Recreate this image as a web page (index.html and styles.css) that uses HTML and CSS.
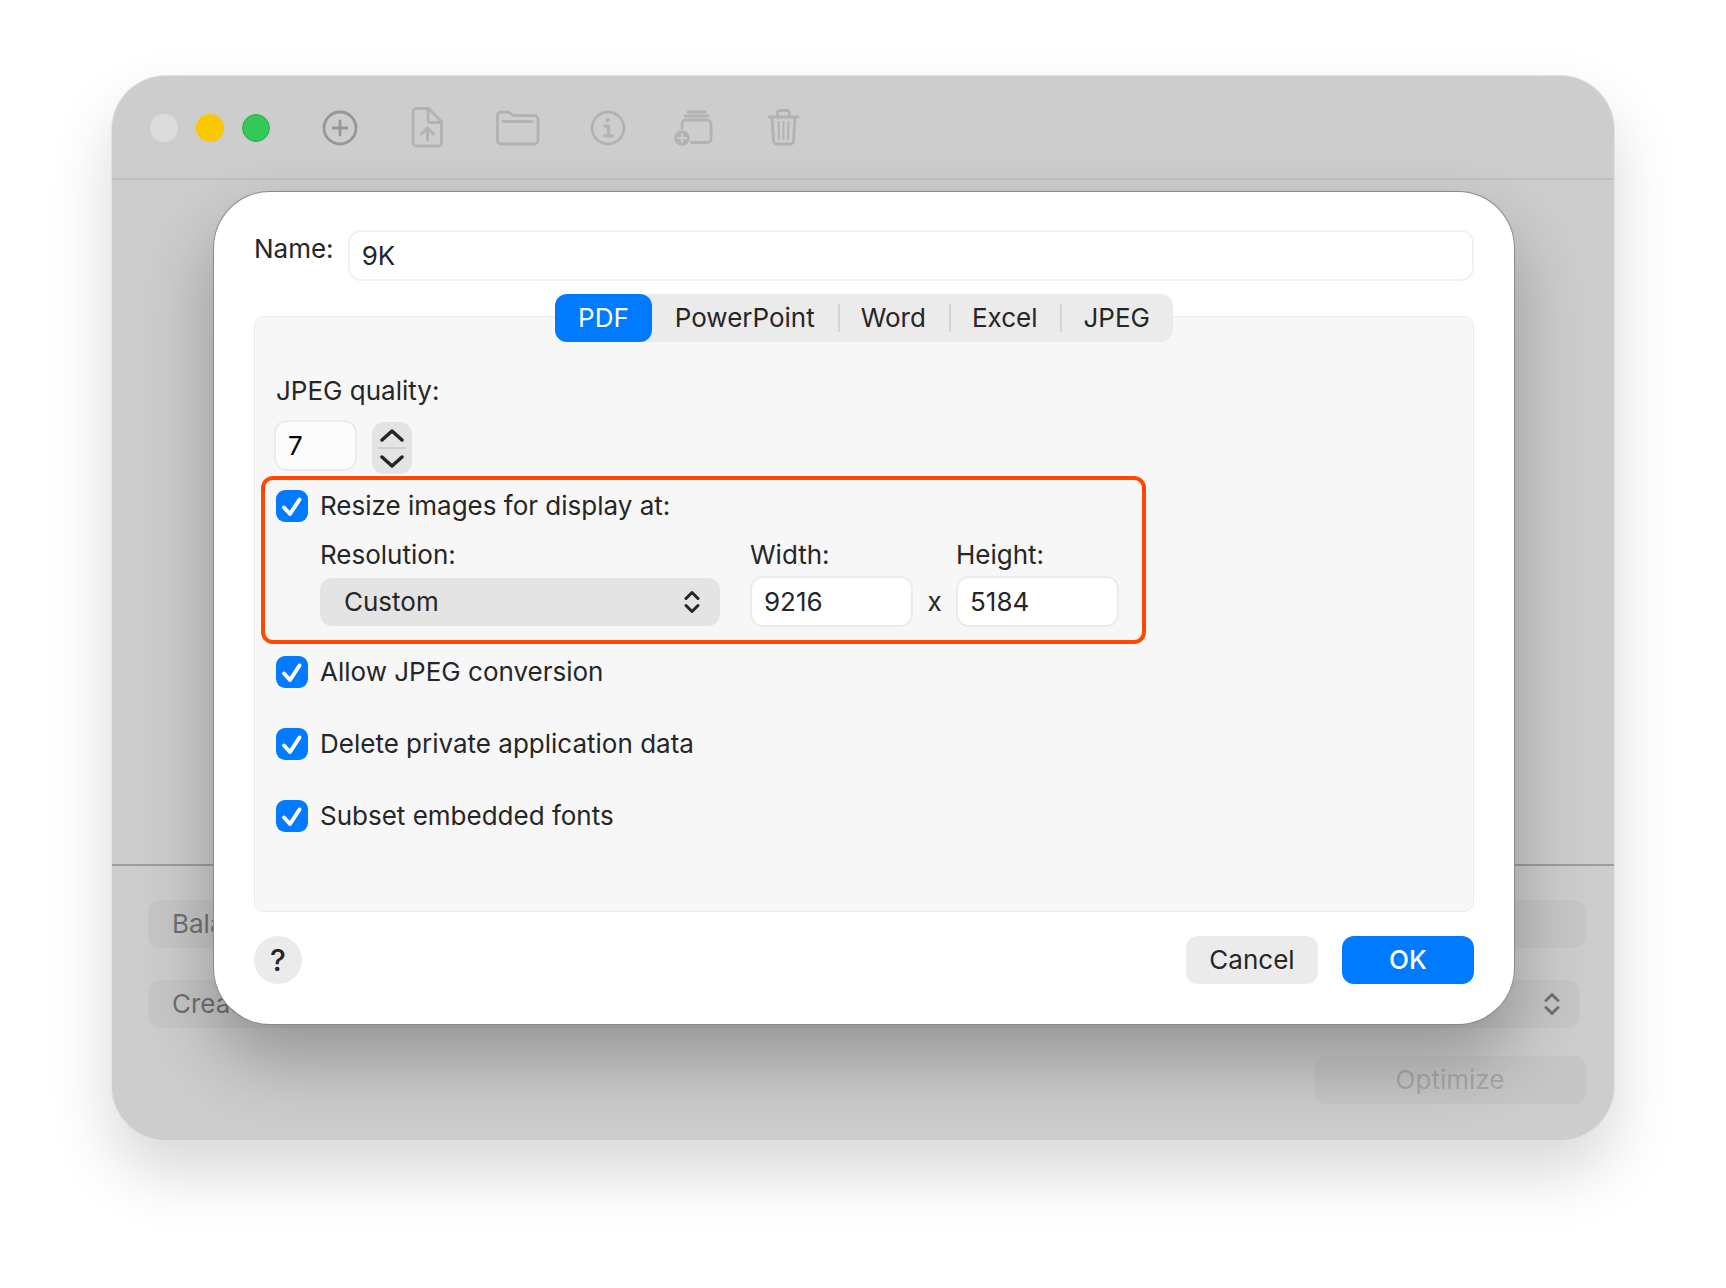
FILE: index.html
```html
<!DOCTYPE html>
<html lang="en">
<head>
    <meta charset="UTF-8">
    <meta name="viewport" content="width=device-width, initial-scale=1.0">
    <title>Preset Settings</title>
    <link rel="stylesheet" href="styles.css">
</head>
<body>
    <div class="window">
        <header class="toolbar">
            <div class="lights">
                <span class="light light-close"></span>
                <span class="light light-min"></span>
                <span class="light light-max"></span>
            </div>
            <div class="tools">
                <button class="tool tool-on" aria-label="Add">
                    <svg viewBox="0 0 48 48"><circle cx="24" cy="24" r="16"/><path d="M24 17v14M17 24h14"/></svg>
                </button>
                <button class="tool" aria-label="Export file">
                    <svg viewBox="0 0 48 48"><path d="M11.500 4.500H23.500L36.500 17.500V38.500a3.500 3.500 0 0 1-3.500 3.500H11.500a3.500 3.500 0 0 1-3.500-3.500V8A3.500 3.500 0 0 1 11.500 4.500z"/><path d="M23 5v11a2.500 2.500 0 0 0 2.500 2.500h10.500M22.500 36V24M16.500 30l6-6 6 6"/></svg>
                </button>
                <button class="tool" aria-label="Open folder">
                    <svg viewBox="0 0 48 48"><path d="M3.500 37V11.500a3.500 3.500 0 0 1 3.500-3.500h6.500c3 0 3.500 3.500 7 3.500H40a4 4 0 0 1 4 4V36a4 4 0 0 1-4 4H7a3.500 3.500 0 0 1-3.500-3.500zM9 17.500h29"/></svg>
                </button>
                <button class="tool" aria-label="Info">
                    <svg viewBox="0 0 48 48"><circle cx="25" cy="24" r="16"/><circle class="solid" cx="24.500" cy="16" r="2.200"/><path d="M22 22h3.500v10M21.500 32h8"/></svg>
                </button>
                <button class="tool" aria-label="Add to stack">
                    <svg viewBox="0 0 48 48"><path d="M16 8h17M13 12h23M10 24v-4a4 4 0 0 1 4-4h21a4 4 0 0 1 4 4v15a3.500 3.500 0 0 1-3.500 3.500H19.500"/><circle class="solid" cx="10" cy="34" r="7.700"/><path class="cut" d="M10 30v8M6 34h8"/></svg>
                </button>
                <button class="tool" aria-label="Delete">
                    <svg viewBox="0 0 48 48"><path d="M8 13h29M16.500 13v-4a2.500 2.500 0 0 1 2.500-2.500h7a2.500 2.500 0 0 1 2.500 2.500v4M11 13l1.500 24a3 3 0 0 0 3 3h14a3 3 0 0 0 3-3L34 13"/><path class="thin" d="M17.500 18l.5 17M22.500 18v17M27.500 18l-.5 17"/></svg>
                </button>
            </div>
        </header>

        <main class="file-list"></main>

        <footer class="actions">
            <div class="action-row">
                <select class="popup popup-plain" aria-label="Preset" disabled>
                    <option>Balanced</option>
                </select>
                <button class="action-btn" aria-label="Edit presets" disabled></button>
            </div>
            <div class="action-row row-wide">
                <select class="popup" aria-label="Destination" disabled>
                    <option>Create copies</option>
                </select>
            </div>
            <div class="action-row row-end">
                <button class="action-btn" disabled>Optimize</button>
            </div>
        </footer>

        <form class="dialog" role="dialog" aria-label="Preset">
            <div class="name-row">
                <label for="name">Name:</label>
                <input type="text" class="field" id="name" value="9K">
            </div>

            <div class="tabs" role="tablist">
                <button type="button" class="tab active" role="tab">PDF</button>
                <button type="button" class="tab" role="tab">PowerPoint</button>
                <button type="button" class="tab" role="tab">Word</button>
                <button type="button" class="tab" role="tab">Excel</button>
                <button type="button" class="tab" role="tab">JPEG</button>
            </div>

            <section class="panel">
                <label class="quality-label" for="quality">JPEG quality:</label>
                <div class="quality">
                    <input type="text" class="field field-quality" id="quality" value="7">
                    <div class="stepper">
                        <button type="button" aria-label="Increase"><svg viewBox="0 0 24 14"><path d="M2 12 12 3l10 9"/></svg></button>
                        <button type="button" aria-label="Decrease"><svg viewBox="0 0 24 14"><path d="M2 2l10 9 10-9"/></svg></button>
                    </div>
                </div>

                <div class="resize">
                    <label class="check"><input type="checkbox" checked>Resize images for display at:</label>
                    <div class="resize-fields">
                        <div class="column column-resolution">
                            <label for="resolution">Resolution:</label>
                            <select class="popup" id="resolution">
                                <option>Custom</option>
                            </select>
                        </div>
                        <div class="column">
                            <label for="width">Width:</label>
                            <input type="text" class="field" id="width" value="9216">
                        </div>
                        <span class="times">x</span>
                        <div class="column">
                            <label for="height">Height:</label>
                            <input type="text" class="field" id="height" value="5184">
                        </div>
                    </div>
                </div>

                <div class="options">
                    <label class="check"><input type="checkbox" checked>Allow JPEG conversion</label>
                    <label class="check"><input type="checkbox" checked>Delete private application data</label>
                    <label class="check"><input type="checkbox" checked>Subset embedded fonts</label>
                </div>
            </section>

            <div class="buttons">
                <button type="button" class="help" aria-label="Help">?</button>
                <button type="button" class="btn">Cancel</button>
                <button type="button" class="btn btn-primary">OK</button>
            </div>
        </form>
    </div>

    <script>
        // Tab switching
        const tabs = document.querySelectorAll('.tab');
        tabs.forEach(tab => {
            tab.addEventListener('click', function() {
                tabs.forEach(t => t.classList.remove('active'));
                this.classList.add('active');
            });
        });

        // Quality stepper
        const quality = document.getElementById('quality');
        const steps = document.querySelectorAll('.stepper button');
        steps[0].addEventListener('click', () => quality.value = Math.min(10, Number(quality.value) + 1));
        steps[1].addEventListener('click', () => quality.value = Math.max(1, Number(quality.value) - 1));
    </script>
</body>
</html>
```

FILE: styles.css
```css
* {
    margin: 0;
    padding: 0;
    box-sizing: border-box;
}

body {
    background-color: #fff;
    min-height: 100vh;
    padding: 76px 112px 148px;
    display: flex;
    font-family: Inter, "Liberation Sans", sans-serif;
    font-size: 26px;
    line-height: 32px;
    color: #262626;
}

button,
input,
select {
    font: inherit;
    color: inherit;
    border: none;
    background: none;
}

.window {
    position: relative;
    flex: 1;
    display: flex;
    flex-direction: column;
    background-color: #cdcdcd;
    border-radius: 54px;
    overflow: hidden;
    box-shadow: 0 0 0 1px #e2e2e2, 0 32px 64px rgba(0, 0, 0, 0.16);
}

/* Toolbar */
.toolbar {
    display: flex;
    align-items: center;
    gap: 46px;
    height: 104px;
    padding: 2px 38px 0;
    border-bottom: 2px solid #c0c0c0;
}

.lights {
    display: flex;
    gap: 18px;
}

.light {
    width: 28px;
    height: 28px;
    border-radius: 50%;
}

.light-close {
    background-color: #dcdcdc;
}

.light-min {
    background-color: #fac800;
}

.light-max {
    background-color: #35c759;
    border: 1px solid #1fb845;
}

.tools {
    display: flex;
    gap: 41px;
}

.tool {
    width: 48px;
    height: 48px;
    color: #b2b2b2;
}

.tool-on {
    color: #979797;
}

.tool svg {
    display: block;
    width: 48px;
    height: 48px;
    fill: none;
    stroke: currentColor;
    stroke-width: 2.800;
    stroke-linecap: round;
    stroke-linejoin: round;
}

.tool .solid {
    fill: currentColor;
    stroke: none;
}

.tool .cut {
    stroke: #cdcdcd;
    stroke-width: 2;
}

.tool .thin {
    stroke-width: 2;
}

.file-list {
    flex: 1;
}

/* Bottom controls */
.actions {
    display: flex;
    flex-direction: column;
    gap: 28px;
    padding: 34px 28px 36px 36px;
    border-top: 2px solid #9c9c9c;
    color: #707070;
}

.action-row {
    display: flex;
    justify-content: space-between;
}

.row-wide {
    padding: 4px 6px 0 0;
}

.row-wide .popup {
    flex: 1;
}

.row-end {
    justify-content: flex-end;
}

.action-btn {
    width: 272px;
    height: 48px;
    border-radius: 12px;
    background-color: rgba(0, 0, 0, 0.03);
    color: #a8a8a8;
}

.popup {
    appearance: none;
    height: 48px;
    padding: 0 24px;
    border-radius: 12px;
    background: #e4e4e4 url("data:image/svg+xml,%3Csvg xmlns='http://www.w3.org/2000/svg' width='16' height='24' fill='none' stroke='%23262626' stroke-width='3' stroke-linecap='round' stroke-linejoin='round'%3E%3Cpath d='M2 8.500l6-6 6 6M2 15.500l6 6 6-6'/%3E%3C/svg%3E") no-repeat right 20px center;
}

.actions .popup {
    opacity: 1;
    background-color: rgba(0, 0, 0, 0.03);
    background-image: url("data:image/svg+xml,%3Csvg xmlns='http://www.w3.org/2000/svg' width='16' height='24' fill='none' stroke='%23707070' stroke-width='3' stroke-linecap='round' stroke-linejoin='round'%3E%3Cpath d='M2 8.500l6-6 6 6M2 15.500l6 6 6-6'/%3E%3C/svg%3E");
}

.actions .popup-plain {
    width: 60%;
}

/* Dialog */
.dialog {
    position: absolute;
    top: 116px;
    right: 100px;
    left: 102px;
    padding: 38px 40px 40px;
    background-color: #fff;
    border-radius: 56px;
    box-shadow: 0 0 0 1px #8a8a8a, 0 36px 72px rgba(0, 0, 0, 0.28);
}

.name-row {
    display: flex;
    gap: 14px;
}

.name-row label {
    padding-top: 3px;
}

.name-row .field {
    flex: 1;
    border-color: #f1f1f1;
}

.field {
    width: 100%;
    height: 51px;
    padding: 0 12px;
    border: 2px solid #ebebeb;
    border-radius: 13px;
    background-color: #fff;
}

.tabs {
    position: relative;
    display: flex;
    width: fit-content;
    margin: 13px auto -26px;
    border-radius: 12px;
    background-color: #ebebeb;
}

.tab {
    position: relative;
    height: 48px;
    padding: 0 23px;
    border-radius: 12px;
    cursor: pointer;
}

.tab.active {
    background-color: #007aff;
    color: #fff;
}

/* Hairline between two inactive tabs */
.tab:not(.active) + .tab:not(.active)::before {
    content: "";
    position: absolute;
    top: 10px;
    left: 0;
    width: 2px;
    height: 28px;
    background-color: #d4d4d4;
}

.panel {
    padding: 58px 6px 79px;
    border: 1px solid #ebebeb;
    border-radius: 10px;
    background-color: #f7f7f7;
}

.quality-label {
    display: block;
    padding-left: 15px;
}

.quality {
    display: flex;
    align-items: flex-start;
    gap: 15px;
    padding: 13px 13px 2px;
}

.field-quality {
    width: 83px;
    background-color: #fcfcfc;
    color: #000;
}

.stepper {
    display: flex;
    flex-direction: column;
    width: 40px;
    height: 52px;
    margin-top: 2px;
    padding: 0 6px;
    border-radius: 12px;
    background-color: #e4e4e4;
}

.stepper button {
    flex: 1;
    display: flex;
    align-items: center;
    justify-content: center;
}

.stepper button + button {
    border-top: 2px solid #cfcfcf;
}

.stepper svg {
    width: 24px;
    height: 14px;
    fill: none;
    stroke: #262626;
    stroke-width: 3.500;
    stroke-linecap: round;
    stroke-linejoin: round;
}

.resize {
    width: fit-content;
    padding: 10px 23px 13px 11px;
    border: 4px solid #ff4800;
    border-radius: 12px;
}

.check {
    display: flex;
    align-items: center;
    gap: 12px;
}

.check input {
    appearance: none;
    width: 32px;
    height: 32px;
    border-radius: 9px;
    background-color: #fff;
    border: 2px solid #ebebeb;
}

.check input:checked {
    border: none;
    background: #007aff url("data:image/svg+xml,%3Csvg xmlns='http://www.w3.org/2000/svg' width='32' height='32' fill='none' stroke='white' stroke-width='4' stroke-linecap='round' stroke-linejoin='round'%3E%3Cpath d='M8 17.500l6 6.500 9.500-14.500'/%3E%3C/svg%3E") no-repeat center;
}

.resize-fields {
    display: flex;
    align-items: flex-end;
    padding: 17px 0 0 44px;
}

.column {
    display: flex;
    flex-direction: column;
    gap: 5px;
    width: 163px;
}

.column-resolution {
    width: 400px;
    margin-right: 30px;
    padding-bottom: 1px;
}

.column-resolution label {
    padding-bottom: 2px;
}

.times {
    width: 43px;
    padding-bottom: 9px;
    text-align: center;
}

.options {
    display: flex;
    flex-direction: column;
    gap: 40px;
    padding: 12px 15px 0;
}

.buttons {
    display: flex;
    gap: 24px;
    padding-top: 24px;
}

.btn {
    width: 132px;
    height: 48px;
    border-radius: 12px;
    background-color: #ebebeb;
    cursor: pointer;
}

.btn-primary {
    background-color: #007aff;
    color: #fff;
    font-weight: 500;
}

.help {
    width: 48px;
    height: 48px;
    margin-right: auto;
    border-radius: 50%;
    background-color: #ebebeb;
    font-size: 30px;
    font-weight: 500;
    cursor: pointer;
}
```
